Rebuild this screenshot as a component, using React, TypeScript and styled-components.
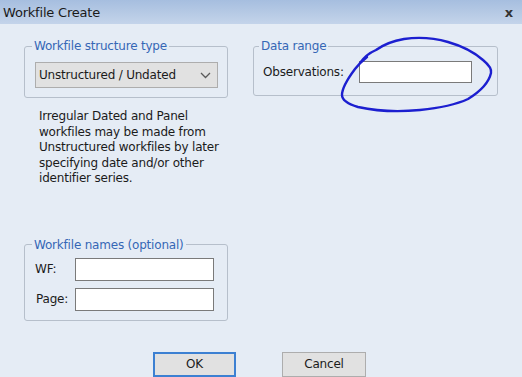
import React from "react";
import styled, { createGlobalStyle } from "styled-components";

const Global = createGlobalStyle`
  html, body { margin: 0; padding: 0; background: #e5ecf5; }
  body { font-family: "DejaVu Sans", "Liberation Sans", sans-serif; letter-spacing: -0.2px; }
`;

const Window = styled.div`
  position: relative;
  width: 522px;
  height: 377px;
  overflow: hidden;
  background: #e5ecf5;
  display: flex;
  flex-direction: column;
  color: #1b1b1b;
  font-size: 12px;
`;

const TitleBar = styled.div`
  height: 24px;
  flex: none;
  display: flex;
  align-items: center;
  justify-content: space-between;
  padding: 0 9px 0 3px;
  background: linear-gradient(#a6bedf, #c4d4ea);
  font-size: 13px;
  color: #1a1a1a;
`;

const Close = styled.span`
  font-weight: bold;
  font-size: 13px;
  color: #333;
`;

const Body = styled.div`
  flex: 1;
  padding: 15px 0 0 24px;
  display: flex;
  flex-direction: column;
`;

const Columns = styled.div`
  display: flex;
  gap: 25px;
  align-items: flex-start;
`;

const LeftCol = styled.div`
  width: 204px;
  display: flex;
  flex-direction: column;
`;

const Group = styled.fieldset<{ $w: number; $pad: string; $mt?: number }>`
  margin: ${(p) => p.$mt ?? 0}px 0 0 0;
  border: 1px solid #b6bfcb;
  border-radius: 3px;
  width: ${(p) => p.$w}px;
  box-sizing: border-box;
  padding: ${(p) => p.$pad};
  min-inline-size: 0;
`;

const Legend = styled.legend`
  padding: 0 2px;
  margin-left: -3px;
  color: #3567b5;
  font-size: 12px;
  line-height: 14px;
`;

const Select = styled.div`
  height: 26px;
  box-sizing: border-box;
  border: 1px solid #adadad;
  background: #e1e1e1;
  display: flex;
  align-items: center;
  justify-content: space-between;
  padding: 0 6px 0 3px;
`;

const Note = styled.p`
  margin: 11px 0 0 0;
  padding-left: 15px;
  line-height: 15.5px;
  font-size: 12px;
`;

const Row = styled.div<{ $label: number }>`
  display: grid;
  grid-template-columns: ${(p) => p.$label}px auto;
  align-items: center;
  & + & {
    margin-top: 7px;
  }
`;

const Label = styled.span<{ $dx?: number }>`
  padding-left: ${(p) => p.$dx ?? 0}px;
`;

const Input = styled.div<{ $w: number; $h: number }>`
  width: ${(p) => p.$w}px;
  height: ${(p) => p.$h}px;
  box-sizing: border-box;
  border: 1px solid #7a7a7a;
  background: #fff;
`;

const ButtonRow = styled.div`
  display: flex;
  gap: 46px;
  margin-top: 31px;
  padding-left: 129px;
`;

const Button = styled.div<{ $w: number; $default?: boolean }>`
  width: ${(p) => p.$w}px;
  height: 25px;
  box-sizing: border-box;
  background: #e1e1e1;
  border: ${(p) => (p.$default ? "2px solid #3c80d2" : "1px solid #adadad")};
  display: flex;
  align-items: center;
  justify-content: center;
  font-size: 12px;
`;

const Scribble = styled.svg`
  position: absolute;
  left: 0;
  top: 0;
  pointer-events: none;
`;

export default function App() {
  return (
    <>
      <Global />
      <Window>
        <TitleBar>
          <span>Workfile Create</span>
          <Close>x</Close>
        </TitleBar>
        <Body>
          <Columns>
            <LeftCol>
              <Group $w={204} $pad="9px 9px 9px 10px">
                <Legend>Workfile structure type</Legend>
                <Select>
                  <span>Unstructured / Undated</span>
                  <svg width="11" height="7" viewBox="0 0 11 7">
                    <path d="M1 1 L5.5 5.5 L10 1" fill="none" stroke="#5a5a5a" strokeWidth="1.3" />
                  </svg>
                </Select>
              </Group>
              <Note>
                Irregular Dated and Panel
                <br />
                workfiles may be made from
                <br />
                Unstructured workfiles by later
                <br />
                specifying date and/or other
                <br />
                identifier series.
              </Note>
              <Group $w={204} $pad="6px 13px 9px 10px" $mt={51}>
                <Legend>Workfile names (optional)</Legend>
                <Row $label={40}>
                  <Label>WF:</Label>
                  <Input $w={139} $h={23} />
                </Row>
                <Row $label={40}>
                  <Label $dx={1}>Page:</Label>
                  <Input $w={139} $h={23} />
                </Row>
              </Group>
            </LeftCol>
            <Group $w={245} $pad="8px 8px 12px 8px">
              <Legend>Data range</Legend>
              <Row $label={97}>
                <Label $dx={1}>Observations:</Label>
                <Input $w={113} $h={22} />
              </Row>
            </Group>
          </Columns>
          <ButtonRow>
            <Button $w={83} $default>
              OK
            </Button>
            <Button $w={84}>Cancel</Button>
          </ButtonRow>
        </Body>
        <Scribble width="522" height="377" viewBox="0 0 522 377">
          <path
            d="M360 63 C364 57 369 53 376 50 C383 45 392 41 404 39 C418 37 434 38 448 42 C462 46 474 52 483 60 C489 65 492 69 491 73 C489 82 481 91 468 99 C455 105 440 108 420 110 C400 112 376 111 358 107 C348 104 342 100 342 95 C342 87 349 77 355 69 C358 65 362 61 367 57"
            fill="none"
            stroke="#1c1fd0"
            strokeWidth="2.4"
            strokeLinecap="round"
          />
        </Scribble>
      </Window>
    </>
  );
}
